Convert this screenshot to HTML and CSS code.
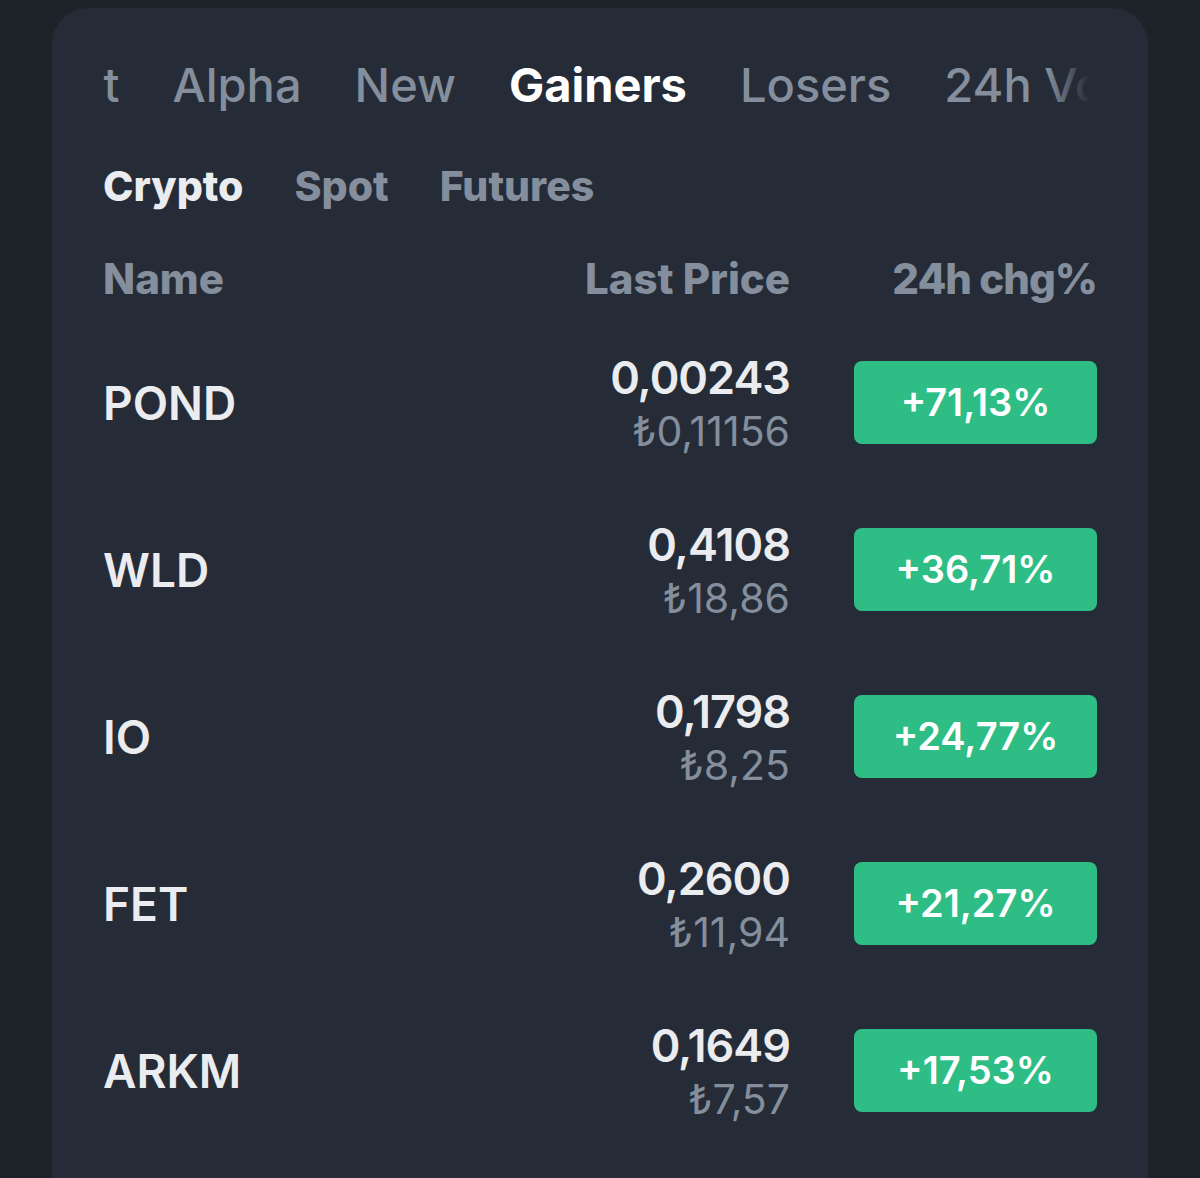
FILE: index.html
```html
<!DOCTYPE html>
<html lang="en">
<head>
    <meta charset="UTF-8">
    <meta name="viewport" content="width=device-width, initial-scale=1.0">
    <title>Markets - Gainers</title>
    <link rel="stylesheet" href="styles.css">
</head>
<body>
    <div class="card">
        <div class="tabs">
            <div class="tabs-track">
                <span class="tab">Hot</span>
                <span class="tab">Alpha</span>
                <span class="tab">New</span>
                <span class="tab active">Gainers</span>
                <span class="tab">Losers</span>
                <span class="tab">24h Vol</span>
            </div>
            <div class="tabs-fade"></div>
        </div>

        <div class="subtabs">
            <span class="subtab active">Crypto</span>
            <span class="subtab">Spot</span>
            <span class="subtab">Futures</span>
        </div>

        <div class="row head">
            <div class="col-name">Name</div>
            <div class="col-price">Last Price</div>
            <div class="col-chg">24h chg%</div>
        </div>

        <div class="row">
            <div class="col-name symbol">POND</div>
            <div class="col-price">
                <div class="price">0,00243</div>
                <div class="fiat">₺0,11156</div>
            </div>
            <div class="col-chg"><span class="badge">+71,13%</span></div>
        </div>
        <div class="row">
            <div class="col-name symbol">WLD</div>
            <div class="col-price">
                <div class="price">0,4108</div>
                <div class="fiat">₺18,86</div>
            </div>
            <div class="col-chg"><span class="badge">+36,71%</span></div>
        </div>
        <div class="row">
            <div class="col-name symbol">IO</div>
            <div class="col-price">
                <div class="price">0,1798</div>
                <div class="fiat">₺8,25</div>
            </div>
            <div class="col-chg"><span class="badge">+24,77%</span></div>
        </div>
        <div class="row">
            <div class="col-name symbol">FET</div>
            <div class="col-price">
                <div class="price">0,2600</div>
                <div class="fiat">₺11,94</div>
            </div>
            <div class="col-chg"><span class="badge">+21,27%</span></div>
        </div>
        <div class="row">
            <div class="col-name symbol">ARKM</div>
            <div class="col-price">
                <div class="price">0,1649</div>
                <div class="fiat">₺7,57</div>
            </div>
            <div class="col-chg"><span class="badge">+17,53%</span></div>
        </div>
    </div>
</body>
</html>
```

FILE: styles.css
```css
body {
    margin: 0;
    background-color: #1e2329;
    font-family: Inter, "Noto Sans", sans-serif;
    color: #eaecef;
    height: 1178px;
    overflow: hidden;
}
.card {
    margin: 8px 52px 0;
    background-color: #252c37;
    border-radius: 36px 36px 0 0;
    padding: 37px 51px 0;
    min-height: 1200px;
}
.tabs {
    position: relative;
    overflow: hidden;
    height: 80px;
}
.tabs-track {
    display: flex;
    gap: 53px;
    transform: translateX(-63px);
    white-space: nowrap;
}
.tab {
    font-size: 47px;
    font-weight: 500;
    color: #848e9c;
    line-height: 80px;
}
.tab.active {
    color: #ffffff;
    font-weight: 700;
}
.tabs-fade {
    position: absolute;
    top: 0;
    right: 0;
    width: 50px;
    height: 100%;
    background: linear-gradient(to right, rgba(37, 44, 55, 0), #252c37 85%);
}
.subtabs {
    display: flex;
    gap: 51px;
    margin-top: 29px;
}
.subtab {
    font-size: 41px;
    font-weight: 800;
    color: #848e9c;
    line-height: 64px;
}
.subtab.active { color: #eaecef; }
.row {
    display: grid;
    grid-template-columns: 1fr 300px 307px;
    align-items: center;
    height: 167px;
}
.row.head {
    height: 60px;
    margin-top: 30px;
    margin-bottom: 11px;
    font-size: 42px;
    font-weight: 800;
    color: #848e9c;
}
.row.head .col-chg { letter-spacing: -1px; }
.col-price { text-align: right; }
.col-chg { text-align: right; }
.symbol {
    font-size: 46px;
    font-weight: 600;
}
.price {
    font-size: 45px;
    font-weight: 600;
    line-height: 52px;
    letter-spacing: -1px;
}
.fiat {
    font-size: 41px;
    color: #848e9c;
    line-height: 46px;
    margin-top: 4px;
}
.badge {
    display: inline-block;
    width: 243px;
    height: 83px;
    line-height: 83px;
    text-align: center;
    background-color: #2ebd85;
    border-radius: 8px;
    color: #ffffff;
    font-size: 38px;
    font-weight: 600;
}
```
